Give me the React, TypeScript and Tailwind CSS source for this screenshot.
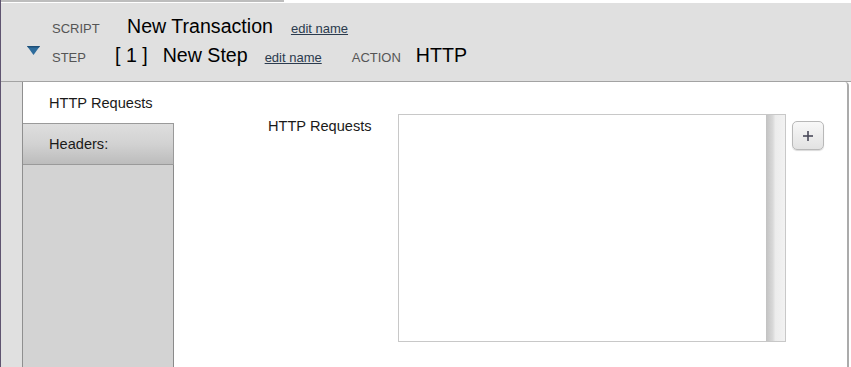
import React from "react";

const font = { fontFamily: '"Liberation Sans", Arial, sans-serif' };

export default function App() {
  return (
    <div
      className="w-[851px] h-[367px] flex flex-col bg-white border-l border-[#5f5470] overflow-hidden"
      style={font}
    >
      {/* top strip */}
      <div className="h-[2px] flex">
        <div className="w-[283px] bg-[#bdbdbd]" />
        <div className="flex-1 bg-white" />
      </div>
      <div className="h-[1px] bg-white" />

      {/* header */}
      <div className="h-[79px] bg-[#e0e0e0] border-b border-[#a3a3a3] pt-[11px] flex flex-col gap-[5px]">
        <div className="flex items-baseline h-[24px] leading-[24px]">
          <div className="w-[51px]" />
          <div className="w-[75px] text-[13px] text-[#555]">SCRIPT</div>
          <div className="text-[19.6px] text-black">New Transaction</div>
          <div className="ml-[18px] text-[13px] text-[#2b3b4e] underline">edit name</div>
        </div>
        <div className="flex items-baseline h-[24px] leading-[24px]">
          <div className="w-[51px] pl-[26px] self-start pt-[3px]">
            <svg width="13" height="9" viewBox="0 0 13 9">
              <polygon points="0,0 13,0 6.5,9" fill="#2e6c9c" />
              <polygon points="0,0 13,0 12,1.5 1,1.5" fill="#1d4f78" />
            </svg>
          </div>
          <div className="w-[63px] text-[13px] text-[#555]">STEP</div>
          <div className="text-[19.6px] text-black">[ 1 ]</div>
          <div className="ml-[15px] text-[19.6px] text-black">New Step</div>
          <div className="ml-[17px] text-[13px] text-[#2b3b4e] underline">edit name</div>
          <div className="ml-[30px] text-[13px] text-[#555]">ACTION</div>
          <div className="ml-[15px] text-[19.6px] text-black">HTTP</div>
        </div>
      </div>

      {/* content */}
      <div className="flex-1 flex">
        <div className="w-[21px] bg-[#e0e0e0]" />
        <div className="w-[827px] flex bg-white border-l border-[#8f8f8f] border-r-2 border-r-[#ababab] rounded-tr-[4px]">
          {/* tabs column */}
          <div className="w-[151px] flex flex-col">
            <div className="h-[41px] flex items-center pl-[26px] text-[14.6px] leading-[20px] text-[#1a1a1a] bg-white">
              HTTP Requests
            </div>
            <div className="h-[42px] flex items-center pl-[26px] text-[14.6px] leading-[20px] text-[#1a1a1a] border-t border-b border-r border-[#9a9a9a] bg-[linear-gradient(to_bottom,#dedede,#d2d2d2_50%,#bcbcbc)]">
              Headers:
            </div>
            <div className="flex-1 bg-[#d3d3d3] border-r border-[#8a8a8a]" />
          </div>

          {/* main */}
          <div className="flex-1 flex pt-[32px] pl-[94px]">
            <div className="w-[130px] pt-[2px] text-[14.6px] leading-[20px] text-[#1a1a1a]">
              HTTP Requests
            </div>
            <div className="w-[388px] h-[228px] border border-[#c8c8c8] flex justify-end">
              <div className="w-[19px] h-full bg-[linear-gradient(to_right,#c2c2c2,#d8d8d8_35%,#ececec_50%,#f2f2f2)]" />
            </div>
            <div className="ml-[6px] mt-[7px] w-[32px] h-[29px] rounded-[5px] border border-[#b8b8b8] bg-[linear-gradient(to_bottom,#f8f8f8,#e2e2e2)] shadow-[0_1px_1px_rgba(0,0,0,0.15)] flex items-center justify-center">
              <svg width="10" height="10" viewBox="0 0 10 10">
                <rect x="4.2" y="0" width="1.6" height="10" fill="#4a4a5a" />
                <rect x="0" y="4.2" width="10" height="1.6" fill="#4a4a5a" />
              </svg>
            </div>
          </div>
        </div>
        <div className="flex-1 bg-white" />
      </div>
    </div>
  );
}
